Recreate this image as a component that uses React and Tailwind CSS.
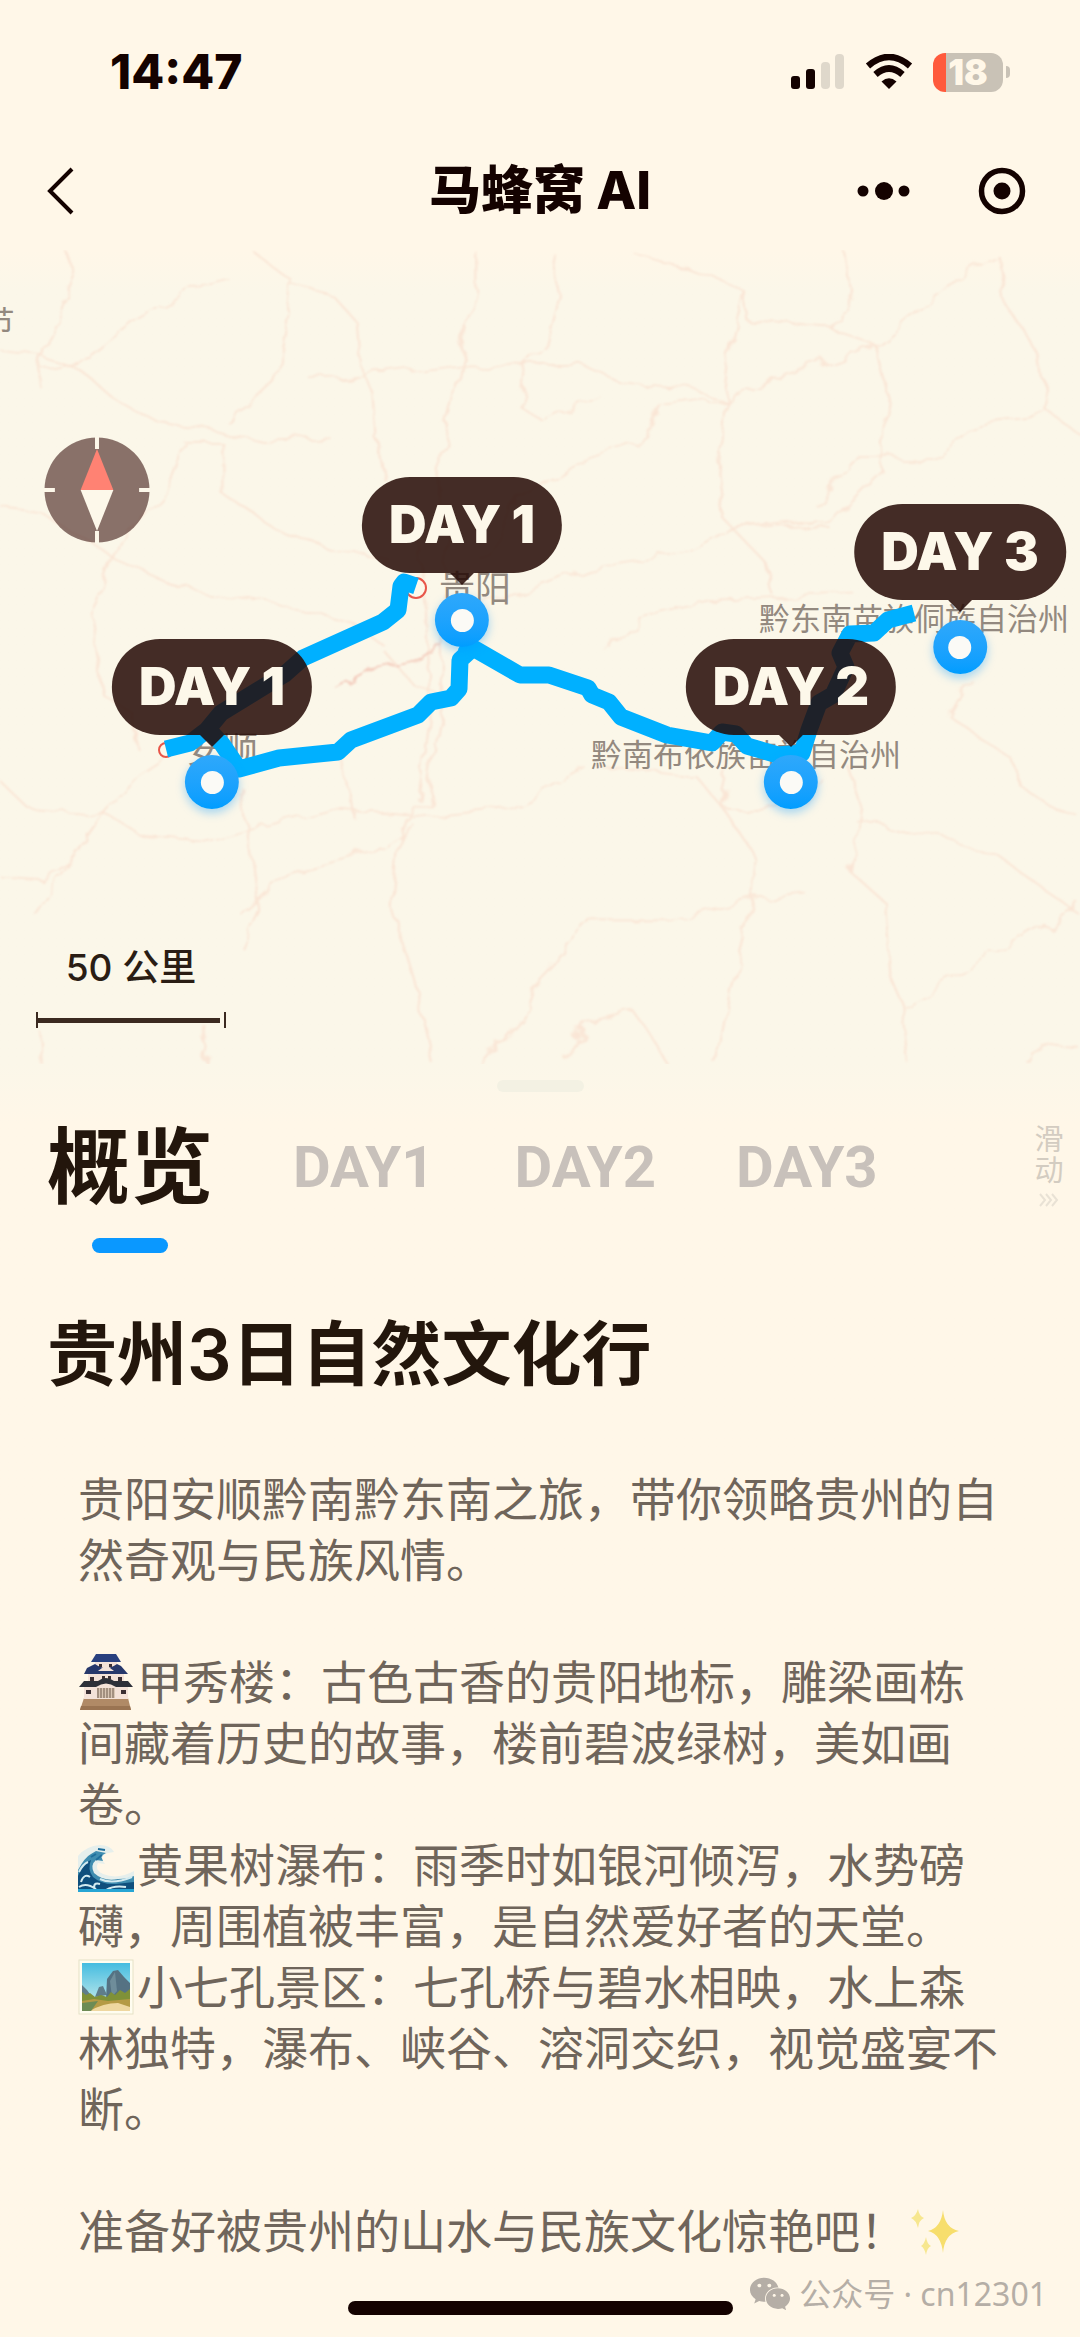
import { useState } from "react";
import { FaWeixin } from "react-icons/fa";

const MAP_W = 1080;
const MAP_H = 814;

const PINS = [
  { id: "guiyang", label: "DAY 1", x: 462, y: 371 },
  { id: "anshun", label: "DAY 1", x: 212, y: 533 },
  { id: "qiannan", label: "DAY 2", x: 791, y: 533 },
  { id: "qiandongnan", label: "DAY 3", x: 960, y: 398 },
];

const PLACES = [
  { name: "节", x: -1, y: 69, big: false },
  { name: "贵阳", x: 475, y: 336, big: true },
  { name: "安顺", x: 222, y: 497, big: true },
  { name: "黔东南苗族侗族自治州", x: 914, y: 366, big: false },
  { name: "黔南布依族苗族自治州", x: 746, y: 502, big: false },
];

const ROUTES = [
  "416,336 404,332 401,336 398,360 383,372 303,408 285,424 265,436 221,463 207,480 190,493 166,499",
  "207,478 222,494 239,519 279,508 338,502 351,490 418,465 431,452 451,448 459,439 460,410 473,398",
  "462,392 473,398 520,425 549,425 588,438 592,445 609,452 621,467 667,485 712,493 722,482 736,484 747,496 778,505 802,503 809,480 819,453 833,445 846,417 840,403 850,384 874,383 888,370 914,363",
];

const ROADS = [
  "370,25 420,70 415,130 400,230 380,300 330,340",
  "415,80 480,100 515,150 520,230 545,290 550,380 560,450",
  "330,70 300,80 200,150 130,220 60,240",
  "0,205 60,215 110,235 160,290 230,340 300,350 380,375 480,370",
  "95,20 110,60 80,150 60,200 55,270",
  "690,20 690,90 670,230 660,300 640,400 635,520",
  "450,260 560,250 680,230 760,235 850,235 900,265 1000,280 1050,295",
  "920,25 1000,55 1080,95 1085,150 1200,165 1270,195",
  "1080,95 1060,200 1050,295 1040,430 1050,520 1110,600 1120,660",
  "1050,295 1150,250 1270,195 1370,90 1450,30",
  "1450,30 1460,120 1510,220 1520,320 1568,360",
  "1230,20 1240,100 1210,170",
  "1270,195 1290,300 1280,430 1210,520 1050,540",
  "1180,490 1240,405 1370,405 1430,340 1520,325",
  "800,20 810,100 790,200 760,240 755,310 790,340 870,290",
  "1050,295 960,310 940,370 850,410 760,480 700,600",
  "0,500 60,510 130,560 170,600",
  "270,380 250,450 175,560 150,650 130,700 150,850 190,880 200,950",
  "265,375 320,375 320,470 400,540 480,580 560,590",
  "170,600 260,650 400,680 520,720 560,760",
  "880,770 930,700 1030,670 1120,665 1240,660",
  "610,500 620,700 625,900 610,1050",
  "650,500 640,700 640,900 620,1050 580,1100 570,1250 600,1380 630,1540",
  "0,1010 40,1060 150,1070 200,1110 300,1120 360,1100 480,1060 600,1075",
  "50,1260 90,1180 150,1070 200,1000 260,950",
  "600,1080 740,1060 800,1020 850,985",
  "350,1020 360,1100 375,1250 350,1320",
  "350,1260 420,1180 540,1140 600,1090",
  "500,960 515,1080",
  "860,980 1010,1000 1050,1060 1150,1060 1190,1000",
  "1065,980 1050,1060 1100,1160 1095,1230 1060,1400 1040,1540",
  "700,1540 760,1450 780,1380 860,1270 980,1270 1095,1230 1170,1220",
  "1230,980 1250,1060 1235,1180 1280,1230 1290,1370 1310,1430 1320,1540",
  "1240,1080 1350,1110 1450,1150 1568,1260",
  "1310,1430 1400,1370 1500,1290 1568,1240",
  "1410,820 1380,890 1470,970 1490,1030 1568,1080",
  "0,1190 60,1195 100,1160 150,1070",
  "60,1480 62,1540",
  "300,1470 290,1540",
  "700,680 750,660 850,610 1000,580 1060,540 1200,530",
  "560,770 600,830 640,850",
  "820,1530 850,1460 920,1440 970,1540",
  "1495,1540 1510,1500 1568,1510",
];

const TABS = ["概览", "DAY1", "DAY2", "DAY3"];

function StatusBar() {
  return (
    <div className="flex h-36 items-center justify-between pr-[70px] pl-[110px]">
      <span className="font-['Inter'] text-[48px] leading-none font-extrabold">14:47</span>
      <div className="flex items-center gap-5">
        <svg className="h-9 w-[54px]" viewBox="0 0 54 36" aria-label="信号">
          <rect x="0" y="22" width="9" height="13" rx="3" fill="#140200" />
          <rect x="15" y="15" width="9" height="20" rx="3" fill="#140200" />
          <rect x="30" y="8" width="9" height="27" rx="4" fill="#dfd8cb" />
          <rect x="44" y="0" width="9" height="35" rx="4" fill="#dfd8cb" />
        </svg>
        <svg className="h-9 w-12" viewBox="0 0 48 36" aria-label="无线网络">
          <path d="M24 35 L16.500 27.500 Q24 21 31.500 27.500 Z" fill="#140200" />
          <path d="M10.500 20.500 Q24 8.500 37.500 20.500" fill="none" stroke="#140200" strokeWidth="6.500" />
          <path d="M3 12 Q24 -6 45 12" fill="none" stroke="#140200" strokeWidth="6.500" />
        </svg>
        <div className="flex items-center gap-[3px]">
          <div className="flex h-[39px] w-[70px] items-center justify-center rounded-xl bg-linear-to-r from-[#ff5a3c] from-19% to-[#c9c2b6] to-19%">
            <span className="font-['Inter'] text-[35px] leading-[39px] font-black text-[#fff7e8]">18</span>
          </div>
          <div className="h-3 w-1 rounded-r-full bg-[#c9c2b6]" />
        </div>
      </div>
    </div>
  );
}

function TitleBar() {
  return (
    <header className="grid h-[106px] grid-cols-[1fr_auto_1fr] items-start px-10">
      <button type="button" aria-label="返回" className="ml-1.5 flex h-[94px] w-10 items-center">
        <svg className="h-12 w-8" viewBox="0 0 32 48" fill="none" stroke="#140200" strokeWidth="4">
          <path d="M26 2 L4 24 L26 46" />
        </svg>
      </button>
      <h1 className="font-['Inter','Noto_Sans_CJK_SC',sans-serif] text-[52px] leading-[94px] font-extrabold">马蜂窝 AI</h1>
      <div className="flex h-[94px] items-center justify-end gap-[67px] pr-3.5">
        <button type="button" aria-label="更多">
          <svg className="h-12 w-[54px]" viewBox="0 0 54 48" fill="#140200">
            <circle cx="6" cy="24" r="5.500" />
            <circle cx="27" cy="24" r="9" />
            <circle cx="47" cy="24" r="5.500" />
          </svg>
        </button>
        <button type="button" aria-label="关闭">
          <svg className="h-12 w-12" viewBox="0 0 48 48">
            <circle cx="24" cy="24" r="20.500" fill="none" stroke="#140200" strokeWidth="5.500" />
            <circle cx="24" cy="24" r="8.500" fill="#140200" />
          </svg>
        </button>
      </div>
    </header>
  );
}

function Compass() {
  return (
    <svg className="absolute top-[187px] left-11 size-[106px]" viewBox="0 0 107 107" aria-label="指南针">
      <circle cx="53.500" cy="53.500" r="53" fill="#4b2a25" fillOpacity=".65" />
      <path d="M53.500 0V12M53.500 95V107M0 53.500H11M96 53.500H107" stroke="#fdf8ea" strokeWidth="4" />
      <path d="M53.500 12 L70 53.500 H37 Z" fill="#ff8273" />
      <path d="M53.500 95 L70 53.500 H37 Z" fill="#fdf8ea" />
    </svg>
  );
}

function Pin({ pin }) {
  return (
    <div
      className="absolute flex -translate-x-1/2 -translate-y-[144px] flex-col items-center"
      style={{ left: `${(pin.x / MAP_W) * 100}%`, top: `${(pin.y / MAP_H) * 100}%` }}
    >
      <div className="flex h-24 items-center rounded-full bg-[#230804]/85 px-[27px] font-['Inter'] text-[52px] leading-none font-black whitespace-nowrap text-[#fdf8ea]">
        {pin.label}
      </div>
      <div className="h-3 w-6 bg-[#230804]/85 [clip-path:polygon(0_0,100%_0,50%_100%)]" />
      <div className="mt-2 flex size-[54px] items-center justify-center rounded-full bg-linear-to-b from-[#2ea8fb] to-[#009dff] shadow-[0_4px_10px_rgba(0,150,255,0.35)]">
        <div className="size-[23px] rounded-full bg-[#fbfaf6]" />
      </div>
    </div>
  );
}

function RouteMap() {
  return (
    <section className="relative h-[814px] overflow-hidden bg-linear-to-b from-[#fff7e8] to-[#fbf7e9] to-[40px]" aria-label="行程地图">
      <svg className="absolute inset-0 h-full w-full" viewBox="0 0 1080 814" preserveAspectRatio="none" fill="none">
        <filter id="wobble" x="0" y="0" width="1" height="1">
          <feTurbulence type="fractalNoise" baseFrequency="0.03" numOctaves="3" seed="4" />
          <feDisplacementMap in="SourceGraphic" scale="20" />
          <feGaussianBlur stdDeviation="0.8" />
        </filter>
        <g filter="url(#wobble)">
          <g transform="translate(0 -10) scale(.6888 .5357)" stroke="#fae5d5" strokeLinejoin="round">
            {ROADS.map((points) => (
              <polyline key={points} points={points} strokeWidth="3" />
            ))}
            <polyline points="490,840 540,805 600,790 640,755" stroke="#f3c9ba" strokeWidth="3" />
          </g>
        </g>
      </svg>

      {PLACES.map((place) => (
        <span
          key={place.name}
          className={`absolute -translate-x-1/2 -translate-y-1/2 font-['Noto_Sans_CJK_SC',sans-serif] leading-none whitespace-nowrap text-[#93897f] ${
            place.big ? "text-[36px]" : "text-[31px]"
          }`}
          style={{ left: `${(place.x / MAP_W) * 100}%`, top: `${(place.y / MAP_H) * 100}%` }}
        >
          {place.name}
        </span>
      ))}

      <svg className="absolute inset-0 h-full w-full" viewBox="0 0 1080 814" preserveAspectRatio="none" fill="none">
        <circle cx="416" cy="338" r="10" stroke="#e8564a" strokeWidth="2" fill="#fdf8ea" />
        <circle cx="166" cy="500" r="7" stroke="#e8564a" strokeWidth="2" fill="#fdf8ea" />
        {ROUTES.map((points) => (
          <polyline key={points} points={points} stroke="#00b0ff" strokeWidth="17" strokeLinejoin="round" />
        ))}
      </svg>

      <Compass />
      {PINS.map((pin) => (
        <Pin key={pin.id} pin={pin} />
      ))}

      <div className="absolute bottom-9 left-9 w-[190px] text-center">
        <span className="font-['Inter','Noto_Sans_CJK_SC',sans-serif] text-[37px] leading-[52px] font-medium text-[#2a1d14]">
          50 公里
        </span>
        <div className="mt-[18px] flex h-4 items-center border-x-2 border-[#3b2a20]">
          <div className="mr-1 h-[5px] flex-1 bg-[#3b2a20]" />
        </div>
      </div>
    </section>
  );
}

function DayTabs() {
  const [active, setActive] = useState("概览");
  return (
    <nav className="flex items-start justify-between pr-4 pl-[47px]">
      <div className="flex items-start gap-20" role="tablist">
        {TABS.map((tab) => (
          <button
            key={tab}
            type="button"
            role="tab"
            aria-selected={tab === active}
            onClick={() => setActive(tab)}
            className="flex flex-col items-center"
          >
            <span
              className={
                tab === "概览"
                  ? "font-['Noto_Sans_CJK_SC',sans-serif] text-[83px] leading-[102px] font-bold text-[#23160c]"
                  : "font-['Roboto'] text-[58px] leading-[114px] font-bold text-[#c8c1bb]"
              }
            >
              {tab}
            </span>
            {tab === active && <span className="mt-[26px] h-[15px] w-[76px] rounded-full bg-[#0a98ff]" />}
          </button>
        ))}
      </div>
      <div className="flex w-[30px] flex-col items-center pt-3 font-['Noto_Sans_CJK_SC',sans-serif] text-[29px] leading-[31px] text-[#d3ccc1]">
        <span>滑</span>
        <span>动</span>
        <svg className="mt-2 h-4 w-5" viewBox="0 0 20 16" fill="none" stroke="#e9e2d5" strokeWidth="2">
          <path d="M1 2 L6 8 L1 14 M7 2 L12 8 L7 14 M13 2 L18 8 L13 14" />
        </svg>
      </div>
    </nav>
  );
}

function Castle() {
  return (
    <svg className="-my-3 mr-[3px] inline-block h-14 w-14 align-[1px]" viewBox="0 0 56 56" role="img" aria-label="城堡">
      <path d="M6 44 H50 L53 56 H2 Z" fill="#b08a66" />
      <path d="M3 52 H52 L53 56 H2 Z" fill="#9a7452" />
      <rect x="6" y="32" width="44" height="13" fill="#f4e2d8" />
      <rect x="10" y="20" width="36" height="12" fill="#f4e2d8" />
      <rect x="17" y="8" width="22" height="8" fill="#f4e2d8" />
      <path d="M18 0 H38 L43 8 H13 Z" fill="#29407f" />
      <path d="M13 12 L17 10 Q28 18 39 10 L43 12 L50 20 H6 L9 14 Z" fill="#27386b" />
      <path d="M20 17 L28 11 L36 17 Z" fill="#f4e2d8" />
      <path d="M6 27 H20 Q28 21 36 27 H50 L55 33 H38 Q28 26 18 33 H1 Z" fill="#2d3039" />
      <rect x="19" y="34" width="18" height="10" fill="#d9c6b4" />
      <path d="M20 34V44M23 34V44M26 34V44M29 34V44M32 34V44M35 34V44" stroke="#6e5a4c" />
      <path d="M12 23h4v4h-4zM24 22h3v3h-3zM30 22h3v3h-3zM40 23h4v4h-4zM8 36h5v4H8zM43 36h5v4h-5zM21 10h3v3h-3zM31 10h3v3h-3z" fill="#3b2f33" />
    </svg>
  );
}

function Wave() {
  return (
    <svg className="-my-3 mr-[3px] inline-block h-14 w-14 align-[-4px]" viewBox="0 0 56 56" role="img" aria-label="海浪">
      <path d="M0 14 Q8 4 22 3 Q32 3 36 10 L30 11 Q24 12 24 18 L27 22 L20 21 Q16 28 25 32 Q40 38 56 29 V50 H0 Z" fill="#e6efec" />
      <path d="M0 28 Q7 15 13 12 L18 9 L28 11 L23 14 L25 19 L18 18 Q12 23 16 31 Q26 40 40 37 Q50 37 56 34 V50 H0 Z" fill="#3f8db0" />
      <path d="M0 34 Q5 21 13 18 Q9 27 15 35 Q24 43 38 42 L56 40 V50 H0 Z" fill="#0f4f7d" />
      <path d="M1 30 Q5 22 10 20 M3 40 Q6 31 12 35 M17 48 Q14 40 22 42 M28 48 Q36 43 48 45 M22 37 Q34 43 54 35 M1 45 Q8 40 18 47" fill="none" stroke="#d4ebf0" strokeWidth="2" />
      <path d="M13 15 L18 12 M18 18 L24 13 M20 7 L27 8" stroke="#1f6f9c" strokeWidth="2" />
      <path d="M0 47 H56 V50 H0 Z" fill="#27a5d4" />
    </svg>
  );
}

function Landscape() {
  return (
    <svg className="-my-3 mr-[3px] inline-block h-14 w-14 align-[1px]" viewBox="0 0 56 56" role="img" aria-label="风景">
      <defs>
        <linearGradient id="sky" x1="0" y1="0" x2="0" y2="1">
          <stop offset="0" stopColor="#45bce0" />
          <stop offset="1" stopColor="#d7f2ee" />
        </linearGradient>
      </defs>
      <rect x="1" y="1" width="54" height="54" fill="#fffdf0" stroke="#e6e2c6" />
      <rect x="4" y="4" width="48" height="48" fill="url(#sky)" />
      <path d="M4 26 L9 31 L14 38 H4 Z M17 38 L21 28 L25 27 L29 36 Z" fill="#5f7d8a" />
      <path d="M28 40 L29 20 L35 12 L40 11 L46 18 L52 24 V40 Z" fill="#557283" />
      <path d="M37 13 L39 32 L34 38 L32 22 Z" fill="#6f8d9a" />
      <path d="M4 33 L8 36 L12 34 L17 38 L23 36 L29 38 L33 33 L37 36 L42 31 L47 34 L52 30 V46 H4 Z" fill="#7f9138" />
      <path d="M4 42 L16 40 L30 42 L52 40 V52 H4 Z" fill="#b59a45" />
      <path d="M12 52 Q25 44 40 44 L52 48 V52 Z" fill="#efd7a0" />
      <path d="M4 44 L20 42 L13 52 H4 Z" fill="#6d8b55" />
    </svg>
  );
}

function Sparkles() {
  return (
    <svg className="ml-1 inline-block h-12 w-[50px] align-[-8px]" viewBox="0 0 50 48" role="img" aria-label="闪光">
      <path d="M33 2 Q34.500 20 49 23 Q34.500 26 33 45 Q31 26 18 23 Q31 20 33 2 Z" fill="#f7de6c" />
      <path d="M8 1 Q9 8 14 10 Q9 12 8 20 Q6 12 1 10 Q6 8 8 1 Z" fill="#f7e78f" />
      <path d="M16 29 Q17 36 21 38 Q17 40 16 47 Q14.500 40 11 38 Q14.500 36 16 29 Z" fill="#f7e78f" />
    </svg>
  );
}

function Overview() {
  return (
    <article>
      <h2 className="px-[47px] font-['Inter','Noto_Sans_CJK_SC',sans-serif] text-[70px] leading-[100px] font-semibold text-[#23160c]">
        贵州3日自然文化行
      </h2>
      <div className="mt-[61px] px-[78px] font-['Noto_Sans_CJK_SC',sans-serif] text-[46px] leading-[61px] text-[#6f655b]">
        <p>贵阳安顺黔南黔东南之旅，带你领略贵州的自然奇观与民族风情。</p>
        <p className="mt-[61px]">
          <Castle />
          甲秀楼：古色古香的贵阳地标，雕梁画栋间藏着历史的故事，楼前碧波绿树，美如画卷。
        </p>
        <p>
          <Wave />
          黄果树瀑布：雨季时如银河倾泻，水势磅礴，周围植被丰富，是自然爱好者的天堂。
        </p>
        <p>
          <Landscape />
          小七孔景区：七孔桥与碧水相映，水上森林独特，瀑布、峡谷、溶洞交织，视觉盛宴不断。
        </p>
        <p className="mt-[61px]">
          准备好被贵州的山水与民族文化惊艳吧！
          <Sparkles />
        </p>
      </div>
    </article>
  );
}

export default function App() {
  return (
    <div className="min-h-screen bg-[#fff7e8] font-['Noto_Sans_CJK_SC',sans-serif] text-[#140200]">
      <StatusBar />
      <TitleBar />
      <RouteMap />
      <main className="bg-linear-to-b from-[#fbf7e9] to-[#fff7e8] to-[60px] pt-4">
        <div className="mx-auto h-3 w-[87px] rounded-full bg-[#f3f1e3]" />
        <div className="pt-[18px]">
          <DayTabs />
        </div>
        <div className="mt-[52px]">
          <Overview />
        </div>
      </main>
      <footer className="relative flex h-[78px] items-end justify-center pb-[22px]">
        <div className="h-[14px] w-[385px] rounded-full bg-[#140200]" />
        <div className="absolute right-[33px] bottom-5 flex items-center gap-2 font-['Noto_Sans','Noto_Sans_CJK_SC',sans-serif] text-[32px] leading-[46px] text-[#b5aea6]">
          <FaWeixin className="size-[42px]" />
          <span>公众号 · cn12301</span>
        </div>
      </footer>
    </div>
  );
}
